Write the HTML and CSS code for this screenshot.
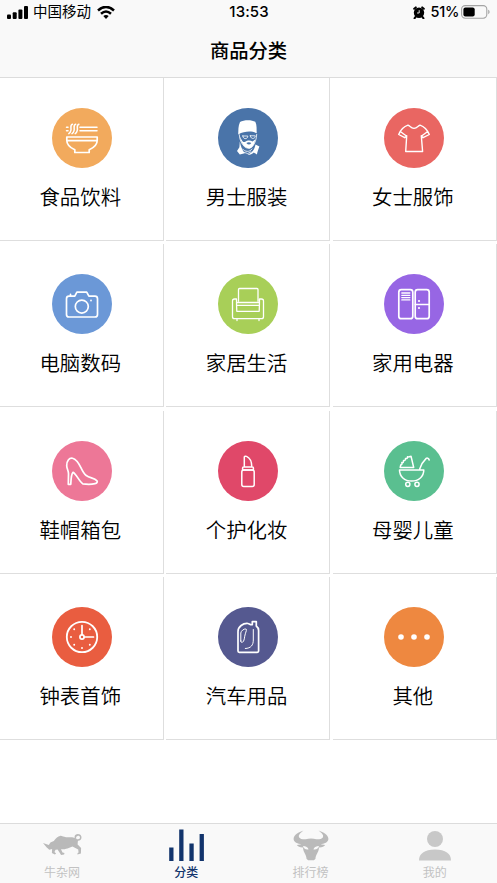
FILE: index.html
```html
<!DOCTYPE html>
<html lang="zh-CN">
<head>
<meta charset="utf-8">
<title>商品分类</title>
<link rel="stylesheet" href="styles.css">
</head>
<body>
<div class="app">
  <header class="header">
    <div class="status">
      <div class="status-left">
        <svg class="signal" width="21" height="13" viewBox="0 0 21 13"><rect x="0" y="8.5" width="4" height="4.5" rx="1"/><rect x="5.7" y="6.3" width="4" height="6.7" rx="1"/><rect x="11.4" y="3.5" width="4" height="9.5" rx="1"/><rect x="17" y="0" width="4" height="13" rx="1"/></svg>
        <span class="carrier">中国移动</span>
        <svg class="wifi" width="18" height="13" viewBox="0 0 18 13"><path d="M1 4.5Q9-2.7 17 4.5M4 7.8Q9 3.3 14 7.8" fill="none" stroke="#000" stroke-width="2.5"/><path d="M6.3 10Q9 7.8 11.7 10L9 13z"/></svg>
      </div>
      <span class="time">13:53</span>
      <div class="status-right">
        <svg class="alarm" width="12" height="13" viewBox="0 0 12 13"><circle cx="6" cy="6.8" r="5.2"/><path d="M1.2 2.8 2.8 1.4M10.8 2.8 9.2 1.4M2.6 10.8 1.5 12.3M9.4 10.8l1.1 1.5" stroke="#000" stroke-width="2" stroke-linecap="round"/><path d="M6.2 4.2V7H4" fill="none" stroke="#f9f9f9" stroke-width=".9"/></svg>
        <span class="percent">51%</span>
        <svg class="battery" width="30" height="14" viewBox="0 0 30 14"><rect x=".6" y=".6" width="25.2" height="12.6" rx="3.6" fill="none" stroke="#a4a4a4" stroke-width="1.1"/><rect x="2.4" y="2.4" width="11.3" height="9" rx="2"/><path d="M27.3 4.8c1.6.6 1.6 3.8 0 4.4z" fill="#999"/></svg>
      </div>
    </div>
    <h1 class="title">商品分类</h1>
  </header>

  <main class="grid">
    <a class="cell"><svg class="icon food" viewBox="0 0 60 60"><circle class="disc" cx="30" cy="30" r="30"/><path d="M28 19.3h17M28 22.8h17M14.5 19.3h1.5M14.5 22.8h1.5" stroke-width="1.5"/><path d="M20.5 16.2c-3 .8-.8 3.8-1.7 6.500q-.4 2-2 3M23.700 16.200c-3 .8-.8 3.800-1.700 6.500q-.4 2-2 3M26.900 16.200c-3 .8-.8 3.800-1.700 6.500q-.4 2-2 3" stroke-width="1.500"/><path d="M14.800 29h30.400v3.500c0 3.500-3 7-8 9.200v2.800H22.800v-2.800c-5-2.200-8-5.700-8-9.200zM15 32.600h30"/></svg><span class="label">食品饮料</span></a>
    <a class="cell"><svg class="icon men" viewBox="0 0 60 60"><circle class="disc" cx="30" cy="30" r="30"/><path class="solid" d="M20.200 26.400c.3-4-.2-8 1.800-12.400 4-2.400 12-2.200 15.300-.2 1.800 3.500 1.200 8 1.400 11.400-5-2.400-12-2.200-18.500 1.200z"/><path d="M21.300 26.700c.2 5 2 9 5.400 12.200 2 1.800 6 1.400 7.800-.5 2.500-3 4-7 4.200-12M24.800 28h5c0 3.600-5 3.600-5 0zM32.300 27.800h5c0 3.600-5 3.600-5 0z" stroke-width=".8"/><path class="solid" d="M21.800 28.500l2.200 4c1 1.500 2 1.800 3.300 1.200 2-1.700 5.200-1.700 7.200-.2l2.700-2c-.5 4-2.400 8.500-5.900 9.200-4.500-.5-8.300-5.200-9.500-12.200z"/><path d="M28.300 35q2.500-1.500 5 0-2.300 3-5 0z" fill="#4a74a9" stroke="none"/><path class="solid" d="M21.800 33.500l-.4 5.800-2.400 3.800 2.800 3.300 5-1.100c-2.700-3.100-4-7.100-5-11.800zM37.500 36.400l3.900 2c-1 2.700-2 5-2.500 8.200l-3.100-2.200c-2 2-4.200 2.400-6.500 2.200 5-1.800 7.200-5 8.200-10.200z"/><path d="M24.500 41c2.500 3 7 3.500 9.500 0M26 44.500q4 2.500 7-.5" stroke-width=".8"/></svg><span class="label">男士服装</span></a>
    <a class="cell"><svg class="icon women" viewBox="0 0 60 60"><circle class="disc" cx="30" cy="30" r="30"/><path d="M24 17.200c2 .5 2.600 2.600 6 3.200 3.400-.6 4-2.700 6-3.200 4 1.300 7.200 4.500 9.300 9.300l-6.200 3.200-1.800-2 1.300 15.800H21.700l1-15.800-2 2-6-3.200c2-4.800 5.300-8 9.300-9.300zM16.300 23.500l5.800 4.200M43.700 23.500l-5.800 4.200" stroke-width="1.400"/></svg><span class="label">女士服饰</span></a>
    <a class="cell"><svg class="icon digital" viewBox="0 0 60 60"><circle class="disc" cx="30" cy="30" r="30"/><path d="M17 22.200h5.800l2.100-4h9.800l2.200 4H43a2.500 2.500 0 0 1 2.500 2.500v15.800A2.500 2.500 0 0 1 43 43H17a2.500 2.500 0 0 1-2.500-2.500V24.700a2.500 2.500 0 0 1 2.500-2.500zM18.500 22v-1.600"/><circle cx="29.800" cy="32.600" r="6.500"/><circle class="solid" cx="39" cy="26.500" r=".9"/></svg><span class="label">电脑数码</span></a>
    <a class="cell"><svg class="icon home" viewBox="0 0 60 60"><circle class="disc" cx="30" cy="30" r="30"/><path d="M20.500 27V15.500q0-1 1-1h17.500q1 0 1 1V27M14.500 27q0-2 2-2h2q0 5 .3 12.300h22.400q.3-7.300.3-12.300h2q2 0 2 2v15.700q0 2-2 2h-27q-2 0-2-2zM18.800 28.500h22.400M18.800 31.300h22.400M19 44.700v1.800M41 44.700v1.800" stroke-width="1.300"/></svg><span class="label">家居生活</span></a>
    <a class="cell"><svg class="icon appliance" viewBox="0 0 60 60"><circle class="disc" cx="30" cy="30" r="30"/><rect x="14.800" y="15.700" width="14" height="29" rx="2.500"/><rect x="31.200" y="15.700" width="14" height="29" rx="2.500"/><path d="M17.800 19h8M17.800 21.300h8M17.800 23.600h8M17.800 25.900h8M31.200 30.500h14" stroke-width="1.300"/><circle class="solid" cx="35" cy="27" r="1.100"/><circle class="solid" cx="35" cy="34" r="1.100"/></svg><span class="label">家用电器</span></a>
    <a class="cell"><svg class="icon shoes" viewBox="0 0 60 60"><circle class="disc" cx="30" cy="30" r="30"/><path d="M16.300 43.300h2.500c.2-4.500.2-10 2.200-12 3.800 2.200 6 9 9.800 11.600 4 .5 8.500.6 12.200-.2 2-.4 2.700-2 2-2.800-2.600-3-7-2.700-10.800-5.400-5.700-4.100-5.900-15.300-13.700-17.300-3-.7-5.800 2.400-5.800 7.500 0 3 1.700 4.700 1.800 8z"/></svg><span class="label">鞋帽箱包</span></a>
    <a class="cell"><svg class="icon beauty" viewBox="0 0 60 60"><circle class="disc" cx="30" cy="30" r="30"/><path d="M26.300 26V16c0-1 1.500-1 2.300-.6 3.300 1.500 5.200 4.800 5.200 10.600M25.600 26h8.800q1 0 1 1v2H24.600v-2q0-1 1-1z" stroke-width="1.500"/><rect x="23.800" y="29" width="12.400" height="16.500" rx="2" stroke-width="1.500"/></svg><span class="label">个护化妆</span></a>
    <a class="cell"><svg class="icon baby" viewBox="0 0 60 60"><circle class="disc" cx="30" cy="30" r="30"/><path d="M15.500 29h24.300c0 6.500-5 11-12.200 11s-12.100-4.500-12.100-11zM27 15.200l2.700 11.300H16.200c.2-1.500.4-2 .8-3 1.500.2 1-1.500.8-2 2 .5 1.700-1.200 1.700-2 2 .3 1.900-.9 2-2 2 .4 1.900-.8 2-1.700 1.600.5 2.200-.1 3.500-.6zM35.700 28c1.600-5 3.800-8 6.500-10.600 1.200-.8 2.600.2 3 1.600" stroke-width="1.500"/><circle cx="23.800" cy="43.300" r="2.100" stroke-width="1.500"/><circle cx="33" cy="43.300" r="2.100" stroke-width="1.500"/></svg><span class="label">母婴儿童</span></a>
    <a class="cell"><svg class="icon watch" viewBox="0 0 60 60"><circle class="disc" cx="30" cy="30" r="30"/><circle cx="30" cy="30" r="15.200" stroke-width="1.800"/><circle cx="30" cy="30" r="2.100"/><path d="M30 27.500v-9M32.500 30h9"/><path d="M19 30h.01M30 41h.01M22.200 22.200h.01M37.800 22.200h.01M22.200 37.800h.01M37.800 37.800h.01" stroke-width="1.900"/></svg><span class="label">钟表首饰</span></a>
    <a class="cell"><svg class="icon auto" viewBox="0 0 60 60"><circle class="disc" cx="30" cy="30" r="30"/><path d="M20 44V24.500c0-4.800 5-8.500 10-8 1 .1 2.200 1.500 4.300 1.200V14.600h4V19c1.600 1.200 2.300 2.500 2.300 4.500V44q0 1.300-1.300 1.300h-18Q20 45.300 20 44z"/><path d="M22.800 34V26c.2-2 3-4.500 5.300-4 .8.300 0 2.400-.8 4.800-1 3-.6 7.500-3 8.600-.8.300-1.500-.5-1.500-1.400zM35.300 22.500V33c0 5-2.200 8.300-8 8.500" stroke-width="1"/></svg><span class="label">汽车用品</span></a>
    <a class="cell"><svg class="icon other" viewBox="0 0 60 60"><circle class="disc" cx="30" cy="30" r="30"/><circle class="solid" cx="17" cy="30" r="2.800"/><circle class="solid" cx="30" cy="30" r="2.800"/><circle class="solid" cx="43" cy="30" r="2.800"/></svg><span class="label">其他</span></a>
  </main>

  <nav class="tabs">
    <a class="tab"><svg class="tab-icon" width="42" height="34" viewBox="0 0 42 34"><path transform="translate(0 1)" fill="#b9b9b9" d="M2 13 7.800 15l1.600-2.500 3.400-1.500C15 8 17 6.200 19 5.900c2-.3 3.500 1.200 6 1.300 4 .2 6.500-.6 9 .8l2 1.200c2 .5 3-.4 3-1.600 0-1.600-1.300-2-2.500-1.700-1.400.3-1.700 1.500-1 2.700l-1.300.2c-1.400-2.500-.1-4.600 2.500-4.800 2.500 0 4 1.700 3.800 3.800-.2 1.900-1.700 3-3.600 2.900l-.3 3.800 3.500 3.500-.2 5.600-3.500.8.200-1.300 1-.5-.4-3-5.700-3-5 1.900c-3 .8-4.500 1-6.500.7l1.500 3.300 2 .4-.4 1.700-3 .3-3.500-5.300-2.100.1-1 2.200 1.600 1.500-1.200 1.200-3-1.500.2-4.100-2.800.7-2.800-2.500z"/></svg><span class="tab-label">牛杂网</span></a>
    <a class="tab active"><svg class="tab-icon" width="42" height="34" viewBox="0 0 42 34"><path fill="#12346c" d="M4.200 18.500h4.300V32H4.200zM14.200.5h4.300V32h-4.300zM24.400 14.500h4.300V32h-4.300zM34.600 5h4.300v27h-4.300z"/></svg><span class="tab-label">分类</span></a>
    <a class="tab"><svg class="tab-icon" width="42" height="34" viewBox="0 0 42 34"><path fill="#bababa" fill-rule="evenodd" d="M13.500 1.600C10 4.300 8 6.500 9.200 8.400c.8 1.500 4 2 6.500 1.800q5.300-1.300 10.600 0c2.500.2 5.700-.3 6.500-1.800C34 6.500 32 4.300 28.500 1.600c5 1.700 9.600 4.400 9.900 8.100.2 3.500-4.500 5-7.800 5.500l4.500.9c-1 1.700-3 2.500-6.100 2.400-.3 5.500-3.500 7-3.500 11.300l-1.600 1.500h-5.800l-1.600-1.500c0-4.300-3.200-5.800-3.500-11.300-3.100.1-5.100-.7-6.100-2.400l4.500-.9c-3.300-.5-8-2-7.800-5.500.3-3.700 4.900-6.400 9.900-8.100zM13 17c.3 2.600 3 4 5.500 3.400-.3-2-2.700-3.300-5.500-3.400zM29 17c-2.800.1-5.200 1.400-5.500 3.400 2.500.6 5.200-.8 5.500-3.400z"/></svg><span class="tab-label">排行榜</span></a>
    <a class="tab"><svg class="tab-icon" width="42" height="34" viewBox="0 0 42 34"><g fill="#c8c8c8"><circle cx="21" cy="10" r="8"/><path d="M5 31.500c0-7 5.500-11 16-11s16 4 16 11z"/></g></svg><span class="tab-label">我的</span></a>
  </nav>
</div>
</body>
</html>
```

FILE: styles.css
```css
* { box-sizing: border-box; }
body {
  margin: 0;
  background: #fff;
  color: #000;
  font-family: Inter, "Noto Sans CJK SC", sans-serif;
}
svg { display: block; flex: none; }
.app {
  display: flex;
  flex-direction: column;
  width: 497px;
  height: 883px;
  overflow: hidden;
}
.header {
  height: 78px;
  flex: none;
  background: #f9f9f9;
  border-bottom: 1px solid #dcdcdc;
}
.status {
  display: grid;
  grid-template-columns: 1fr auto 1fr;
  align-items: center;
  height: 24px;
  padding: 0 6px 0 7px;
  font-size: 15px;
  font-weight: 500;
  line-height: 24px;
}
.status-left, .status-right { display: flex; align-items: center; }
.status-right { justify-content: flex-end; }
.carrier {
  margin: 0 6px 0 5px;
  font-size: 14.5px;
  font-weight: 400;
  line-height: 24px;
}
.time { letter-spacing: 0.1px; }
.alarm { margin-right: 6px; }
.percent { margin-right: 2px; font-size: 14.5px; letter-spacing: -0.3px; }
.title {
  margin: 0;
  padding-top: 12px;
  font-size: 19.3px;
  font-weight: 500;
  line-height: 31px;
  text-align: center;
}
.grid {
  display: grid;
  flex: 1;
  grid-template-columns: repeat(3, 164px);
  grid-auto-rows: 163px;
  align-content: start;
  gap: 3.26px 2.3px;
}
.cell {
  display: flex;
  flex-direction: column;
  align-items: center;
  padding: 30px 1px 0 0;
  border-right: 1px solid #dedede;
  border-bottom: 1px solid #dedede;
}
.icon {
  width: 60px;
  height: 60px;
  margin-left: 1.5px;
  fill: none;
  stroke: #fff;
  stroke-width: 1.7;
  stroke-linecap: round;
  stroke-linejoin: round;
}
.disc { fill: currentColor; stroke: none; }
.solid { fill: #fff; stroke: none; }
.label {
  margin: 15px 1.5px 0 0;
  font-size: 20.4px;
  font-weight: 350;
  line-height: 30px;
  white-space: nowrap;
}
.food { color: #f2aa5d; }
.men { color: #4a74a9; }
.women { color: #e96662; }
.digital { color: #6b98d7; }
.home { color: #a8cf58; }
.appliance { color: #9766e4; }
.shoes { color: #ed7797; }
.beauty { color: #e04869; }
.baby { color: #5abf90; }
.watch { color: #e95d40; }
.auto { color: #555990; }
.other { color: #ee8840; }
.tabs {
  display: grid;
  grid-template-columns: repeat(4, 1fr);
  flex: none;
  height: 60px;
  background: #f9f9f9;
  border-top: 1px solid #dcdcdc;
}
.tab {
  display: flex;
  flex-direction: column;
  align-items: center;
  padding-top: 5px;
  color: #c2c2c2;
}
.tab-label { font-size: 12px; line-height: 20px; }
.active { color: #12346c; font-weight: 500; }
```
